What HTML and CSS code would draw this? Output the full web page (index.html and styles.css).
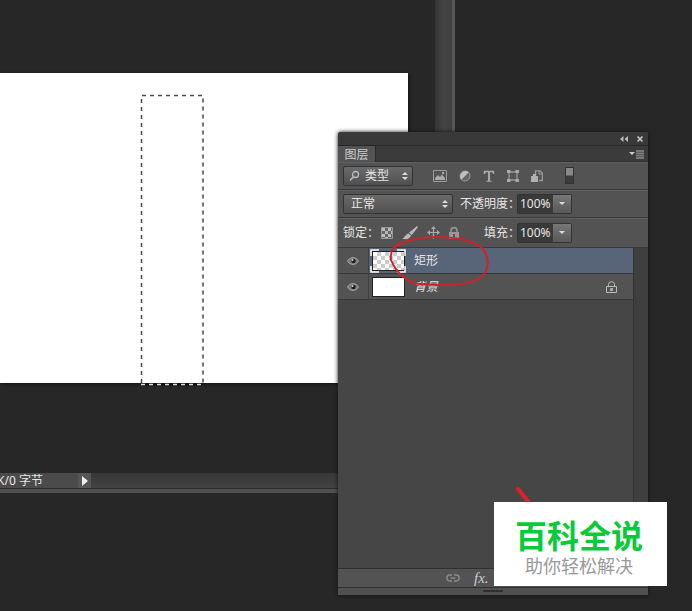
FILE: index.html
```html
<!DOCTYPE html>
<html lang="zh-CN">
<head>
<meta charset="utf-8">
<title>图层</title>
<link rel="stylesheet" href="styles.css">
</head>
<body>
<main class="desktop">
  <section class="document" aria-label="画布">
    <div class="viewport">
      <div class="artboard">
        <svg class="marquee" width="64" height="292" viewBox="0 0 64 292" fill="none" aria-hidden="true">
          <path d="M1.500 289V1.500H63V289" stroke="#484848" stroke-width="1.500" stroke-dasharray="4 4"/>
          <path d="M1 290.500H63" stroke="#111" stroke-width="2"/>
          <path d="M1 290.500H63" stroke="#ddd" stroke-width="1.500" stroke-dasharray="4 4"/>
        </svg>
      </div>
    </div>
    <div class="v-scroll"></div>
    <footer class="status">
      <span class="status-text">K/0 字节</span>
      <button class="status-more" aria-label="状态选项"><svg width="6" height="10" viewBox="0 0 6 10"><path d="M0 0L6 5L0 10Z" fill="#eee"/></svg></button>
    </footer>
  </section>

  <aside class="panel" aria-label="图层面板">
    <header class="titlebar">
      <button class="icon" aria-label="折叠"><svg width="8" height="6" viewBox="0 0 8 6"><path d="M3.500 0V6L0 3ZM8 0V6L4.500 3Z" fill="#bbb"/></svg></button>
      <button class="icon" aria-label="关闭"><svg width="6" height="6" viewBox="0 0 6 6"><path d="M.5 .5L5.500 5.500M5.500 .5L.5 5.500" stroke="#ccc" stroke-width="1.500"/></svg></button>
    </header>
    <div class="tabs">
      <button class="tab">图层</button>
      <button class="icon" aria-label="面板菜单"><svg width="15" height="9" viewBox="0 0 15 9"><path d="M0 2H6L3 5Z" fill="#ccc"/><path d="M7 0H15V9H7Z" fill="#777"/><path d="M7 2.500H15M7 4.500H15M7 6.500H15" stroke="#606060"/></svg></button>
    </div>

    <div class="row filter">
      <label class="select kind">
        <svg width="11" height="12" viewBox="0 0 11 12" fill="none" stroke="#bbb"><circle cx="6.500" cy="4.500" r="3" stroke-width="1.300"/><path d="M4.300 7L1 10.500" stroke-width="1.500"/></svg>
        <select aria-label="滤镜类型"><option>类型</option></select>
        <svg class="arrows" width="6" height="8" viewBox="0 0 6 8"><path d="M0 3L3 0L6 3ZM0 5H6L3 8Z" fill="#ddd"/></svg>
      </label>
      <div class="filter-icons">
        <button class="icon" aria-label="像素图层"><svg width="14" height="12" viewBox="0 0 14 12"><path d="M.5 .5H13.500V11.500H.5Z" fill="none" stroke="#999"/><path d="M2 10V8L5 5L7 7L9 4.500L12 8V10Z" fill="#aaa"/><path d="M9 2h2v2h-2Z" fill="#aaa"/></svg></button>
        <button class="icon" aria-label="调整图层"><svg width="12" height="12" viewBox="0 0 12 12"><circle cx="6" cy="6" r="5" fill="#666" stroke="#999"/><path d="M9.700 2.300A5.300 5.300 0 0 0 2.300 9.700Z" fill="#c0c0c0"/></svg></button>
        <button class="icon" aria-label="文字图层"><svg width="12" height="12" viewBox="0 0 12 12"><path d="M.8 4V.8H11.200V4H10.200L9 2.200H7V10.500L8.700 11V11.800H3.300V11L5 10.500V2.200H3L1.800 4Z" fill="#aaa"/></svg></button>
        <button class="icon" aria-label="形状图层"><svg width="12" height="12" viewBox="0 0 12 12"><path d="M2 2H10V10H2Z" fill="none" stroke="#999" stroke-width="1.300"/><path d="M0 0H3.500V3H0ZM8.500 0H12V3H8.500ZM0 9H3.500V12H0ZM8.500 9H12V12H8.500Z" fill="#aaa"/></svg></button>
        <button class="icon" aria-label="智能对象"><svg width="12" height="12" viewBox="0 0 12 12"><path d="M4.500 5V.8H9L11.300 3V10.500H8" fill="none" stroke="#999" stroke-width="1.300"/><path d="M8 1V4H11" fill="none" stroke="#999"/><path d="M0 6H7V12H0ZM2 4H5V6H2Z" fill="#b0b0b0"/></svg></button>
      </div>
      <button class="switch" aria-label="滤镜开关"></button>
    </div>

    <div class="row blend">
      <label class="select mode">
        <select aria-label="混合模式"><option>正常</option></select>
        <svg class="arrows" width="6" height="8" viewBox="0 0 6 8"><path d="M0 3L3 0L6 3ZM0 5H6L3 8Z" fill="#ddd"/></svg>
      </label>
      <label class="caption" for="opacity">不透明度：</label>
      <div class="percent"><input id="opacity" value="100%"><button aria-label="不透明度滑块"><svg width="6" height="3" viewBox="0 0 6 3"><path d="M0 0H6L3 3Z" fill="#ddd"/></svg></button></div>
    </div>

    <div class="row lock">
      <span class="caption lock-label">锁定：</span>
      <div class="lock-icons">
        <button class="icon" aria-label="锁定透明像素"><svg width="12" height="12" viewBox="0 0 12 12"><path d="M.5 .5H11.500V11.500H.5Z" fill="#666" stroke="#999"/><path d="M1 1h3v3h-3ZM7 1h3v3h-3ZM4 4h3v3h-3ZM1 7h3v3h-3ZM7 7h3v3h-3ZM10 4h1v3h-1ZM4 10h3v1h-3Z" fill="#bbb"/></svg></button>
        <button class="icon" aria-label="锁定图像像素"><svg width="16" height="14" viewBox="0 0 16 14"><path d="M15 0L16 1L9.800 9L7 6.800Z" fill="#bbb"/><path d="M6.500 7.500L9 9.500C8 13 4 14 0 12.500C3 12 3.500 8 6.500 7.500Z" fill="#bbb"/></svg></button>
        <button class="icon" aria-label="锁定位置"><svg width="13" height="13" viewBox="0 0 13 13"><path d="M2 6.500H11M6.500 2V11" stroke="#aaa" stroke-width="1.200"/><path d="M6.500 0L9 3H4ZM6.500 13L4 10H9ZM0 6.500L3 4V9ZM13 6.500L10 9V4Z" fill="#aaa"/></svg></button>
        <button class="icon" aria-label="锁定全部"><svg width="10" height="12" viewBox="0 0 10 12"><path d="M2 6V3.500a3 2.800 0 0 1 6 0V6" fill="none" stroke="#999" stroke-width="1.500"/><path d="M0 5H10V12H0Z" fill="#999"/><path d="M4 7h2v3h-2Z" fill="#555"/></svg></button>
      </div>
      <label class="caption fill-label" for="fill">填充：</label>
      <div class="percent"><input id="fill" value="100%"><button aria-label="填充滑块"><svg width="6" height="3" viewBox="0 0 6 3"><path d="M0 0H6L3 3Z" fill="#ddd"/></svg></button></div>
    </div>

    <div class="stack">
      <ul class="layers">
        <li class="layer selected">
          <button class="eye" aria-label="显示矩形"><svg width="12" height="8" viewBox="0 0 12 8"><path d="M.5 4C3-.5 9-.5 11.500 4C9 8.500 3 8.500 .5 4Z" fill="#777" stroke="#aaa"/><circle cx="6.500" cy="4" r="2.200" fill="#222"/><circle cx="5.500" cy="3" r="1" fill="#ccc"/></svg></button>
          <span class="thumb checker"><svg class="corners" width="36" height="24" viewBox="0 0 36 24" fill="none" stroke="#fff" stroke-width="1.500"><path d="M1 7V1H9M27 1H35V7M35 17V23H27M9 23H1V17"/></svg></span>
          <span class="name">矩形</span>
        </li>
        <li class="layer">
          <button class="eye" aria-label="显示背景"><svg width="12" height="8" viewBox="0 0 12 8"><path d="M.5 4C3-.5 9-.5 11.500 4C9 8.500 3 8.500 .5 4Z" fill="#777" stroke="#aaa"/><circle cx="6.500" cy="4" r="2.200" fill="#222"/><circle cx="5.500" cy="3" r="1" fill="#ccc"/></svg></button>
          <span class="thumb"></span>
          <span class="name base">背景</span>
          <svg class="padlock" width="11" height="12" viewBox="0 0 11 12" fill="none" stroke="#bbb"><path d="M.5 5.500H10.500V11.500H.5Z"/><path d="M2.500 5.500V3.500a3 2.800 0 0 1 6 0V5.500"/><path d="M4 7h3v3h-3Z" fill="#aaa" stroke="none"/></svg>
        </li>
      </ul>
      <div class="track"></div>
    </div>

    <footer class="actions">
      <button class="icon" aria-label="链接图层"><svg width="14" height="8" viewBox="0 0 14 8" fill="none" stroke="#8c8c8c" stroke-width="1.500"><path d="M6 1H3.500a2.600 3 0 0 0 0 6H6M8 1H10.500a2.600 3 0 0 1 0 6H8M4.500 4H9.500"/></svg></button>
      <button class="fx" aria-label="图层样式">fx.</button>
    </footer>
    <div class="grip"></div>

    <svg class="circle-note" width="106" height="56" viewBox="0 0 106 56" fill="none" aria-hidden="true"><path d="M9 15C20 8 34 5 50 5C70 5 86 9 95 15C102 21 103 31 100 39C96 49 82 52 64 53C50 53 36 53 28 51C16 47 8 36 5 28C4 20 7 14 14 11" stroke="#cd222b" stroke-width="2" stroke-linecap="round"/></svg>
    <svg class="arrow-note" width="20" height="20" viewBox="0 0 20 20" aria-hidden="true"><path d="M4 3L17 19" stroke="#e02028" stroke-width="4" stroke-linecap="round"/></svg>
  </aside>

  <div class="badge">
    <strong>百科全说</strong>
    <span>助你轻松解决</span>
  </div>
</main>
</body>
</html>
```
FILE: styles.css
```css
* { box-sizing: border-box; }
body {
  margin: 0;
  background: #272727;
  color: #e6e6e6;
  font: 12px/16px "Noto Sans", "Noto Sans CJK SC", sans-serif;
}
button, input, select { font: inherit; color: inherit; margin: 0; padding: 0; border: 0; background: none; }
button { display: flex; align-items: center; justify-content: center; }
svg { display: block; flex: none; }
.desktop { position: relative; min-height: 100vh; overflow: hidden; }

/* Document window */
.document {
  display: grid;
  grid-template-columns: 1fr 20px;
  width: 455px;
  max-width: 100%;
  border-bottom: 4px solid #505050;
}
.viewport { padding: 73px 27px 90px 0; }
.artboard { position: relative; height: 310px; background: #fff; box-shadow: 1px 1px 3px #111; }
.marquee { position: absolute; left: 140px; top: 21px; }
.v-scroll { background: linear-gradient(90deg, #353535, #444 50%, #404040); border-right: 3px solid #575757; }
.status { grid-column: 1 / -1; display: flex; height: 16px; background: linear-gradient(#373737, #434343); border-bottom: 1px solid #2c2c2c; }
.status-text { width: 78px; background: #4b4b4b; line-height: 15px; text-indent: -3px; white-space: nowrap; }
.status-more { width: 13px; background: #555; }

/* Layers panel */
.panel {
  position: absolute;
  left: 338px;
  top: 132px;
  width: 310px;
  background: #535353;
  border-radius: 3px 3px 0 0;
  box-shadow: 0 0 4px #111;
}
.titlebar { display: flex; align-items: center; justify-content: flex-end; gap: 9px; height: 14px; padding: 0 5px; background: #393939; border-bottom: 1px solid #282828; border-radius: 3px 3px 0 0; }
.tabs { display: flex; align-items: center; justify-content: space-between; height: 16px; padding-right: 4px; background: #3b3b3b; box-shadow: inset 0 -1px #303030; }
.tab { width: 38px; height: 16px; padding-top: 2px; background: #535353; border-right: 1px solid #2b2b2b; color: #ccc; line-height: 16px; }
.row { display: flex; align-items: center; height: 28px; padding: 0 5px; border-bottom: 1px solid #393939; box-shadow: inset 0 1px #606060; }
.select { display: flex; align-items: center; height: 20px; padding: 0 4px 0 7px; border: 1px solid #333; border-radius: 2px; background: linear-gradient(#6a6a6a, #505050); }
.select select { flex: 1; min-width: 0; appearance: none; outline: 0; line-height: 18px; }
.kind { width: 70px; gap: 5px; padding-left: 5px; }
.mode { width: 110px; margin-right: 7px; }
.filter-icons { display: flex; align-items: center; gap: 12px; margin-left: 20px; }
.switch { width: 9px; height: 17px; margin-left: 22px; border: 1px solid #333; background: linear-gradient(#888 0 7px, #3c3c3c 8px); }
.caption { width: 57px; white-space: nowrap; }
.percent { display: flex; width: 55px; height: 20px; border: 1px solid #333; border-radius: 2px; background: #3a3a3a; }
.percent input { flex: 1; min-width: 0; padding-left: 2px; outline: 0; }
.percent button { width: 18px; background: linear-gradient(#777, #595959); }
.lock { height: 30px; }
.lock-label { width: 38px; }
.lock-icons { display: flex; align-items: center; gap: 9px; width: 103px; }
.fill-label { width: 33px; }

.stack { display: flex; height: 320px; background: #464646; }
.layers { flex: 1; margin: 0; padding: 0; list-style: none; }
.layer { display: flex; align-items: center; height: 26px; padding-right: 16px; background: #535353; border-bottom: 1px solid #383838; }
.selected { background: linear-gradient(90deg, #535353 31px, #586579 31px); }
.eye { width: 31px; height: 25px; border-right: 1px solid #404040; }
.thumb { position: relative; width: 33px; height: 20px; margin: 0 9px 0 3px; border: 1px solid #222; background: #fff; }
.checker { background: conic-gradient(#ccc 25%, #fff 0 50%, #ccc 0 75%, #fff 0) 0 0 / 8px 8px; }
.corners { position: absolute; left: -3px; top: -3px; }
.name { flex: 1; }
.base { font-style: italic; }
.track { width: 15px; background: #3f3f3f; border-left: 1px solid #333; }
.actions { display: flex; align-items: center; gap: 14px; height: 20px; padding-left: 108px; border-top: 1px solid #303030; border-bottom: 1px solid #303030; }
.fx { font: italic 15px/16px "Liberation Serif", serif; color: #ccc; }
.grip { height: 7px; background: linear-gradient(#303030, #303030) 50% 2px / 20px 2px no-repeat #505050; }
.circle-note { position: absolute; left: 48px; top: 100px; pointer-events: none; }
.arrow-note { position: absolute; left: 176px; top: 354px; pointer-events: none; }

/* Site badge */
.badge {
  position: absolute;
  left: 494px;
  top: 502px;
  display: flex;
  flex-direction: column;
  align-items: center;
  padding: 12px 24px 10px 21px;
  background: #fff;
  font-family: "Noto Sans CJK SC", sans-serif;
  white-space: nowrap;
}
.badge strong { color: #0acb37; font-size: 32px; font-weight: 700; line-height: 40px; }
.badge span { color: #999; font-size: 18px; font-weight: 400; line-height: 22px; }
```
